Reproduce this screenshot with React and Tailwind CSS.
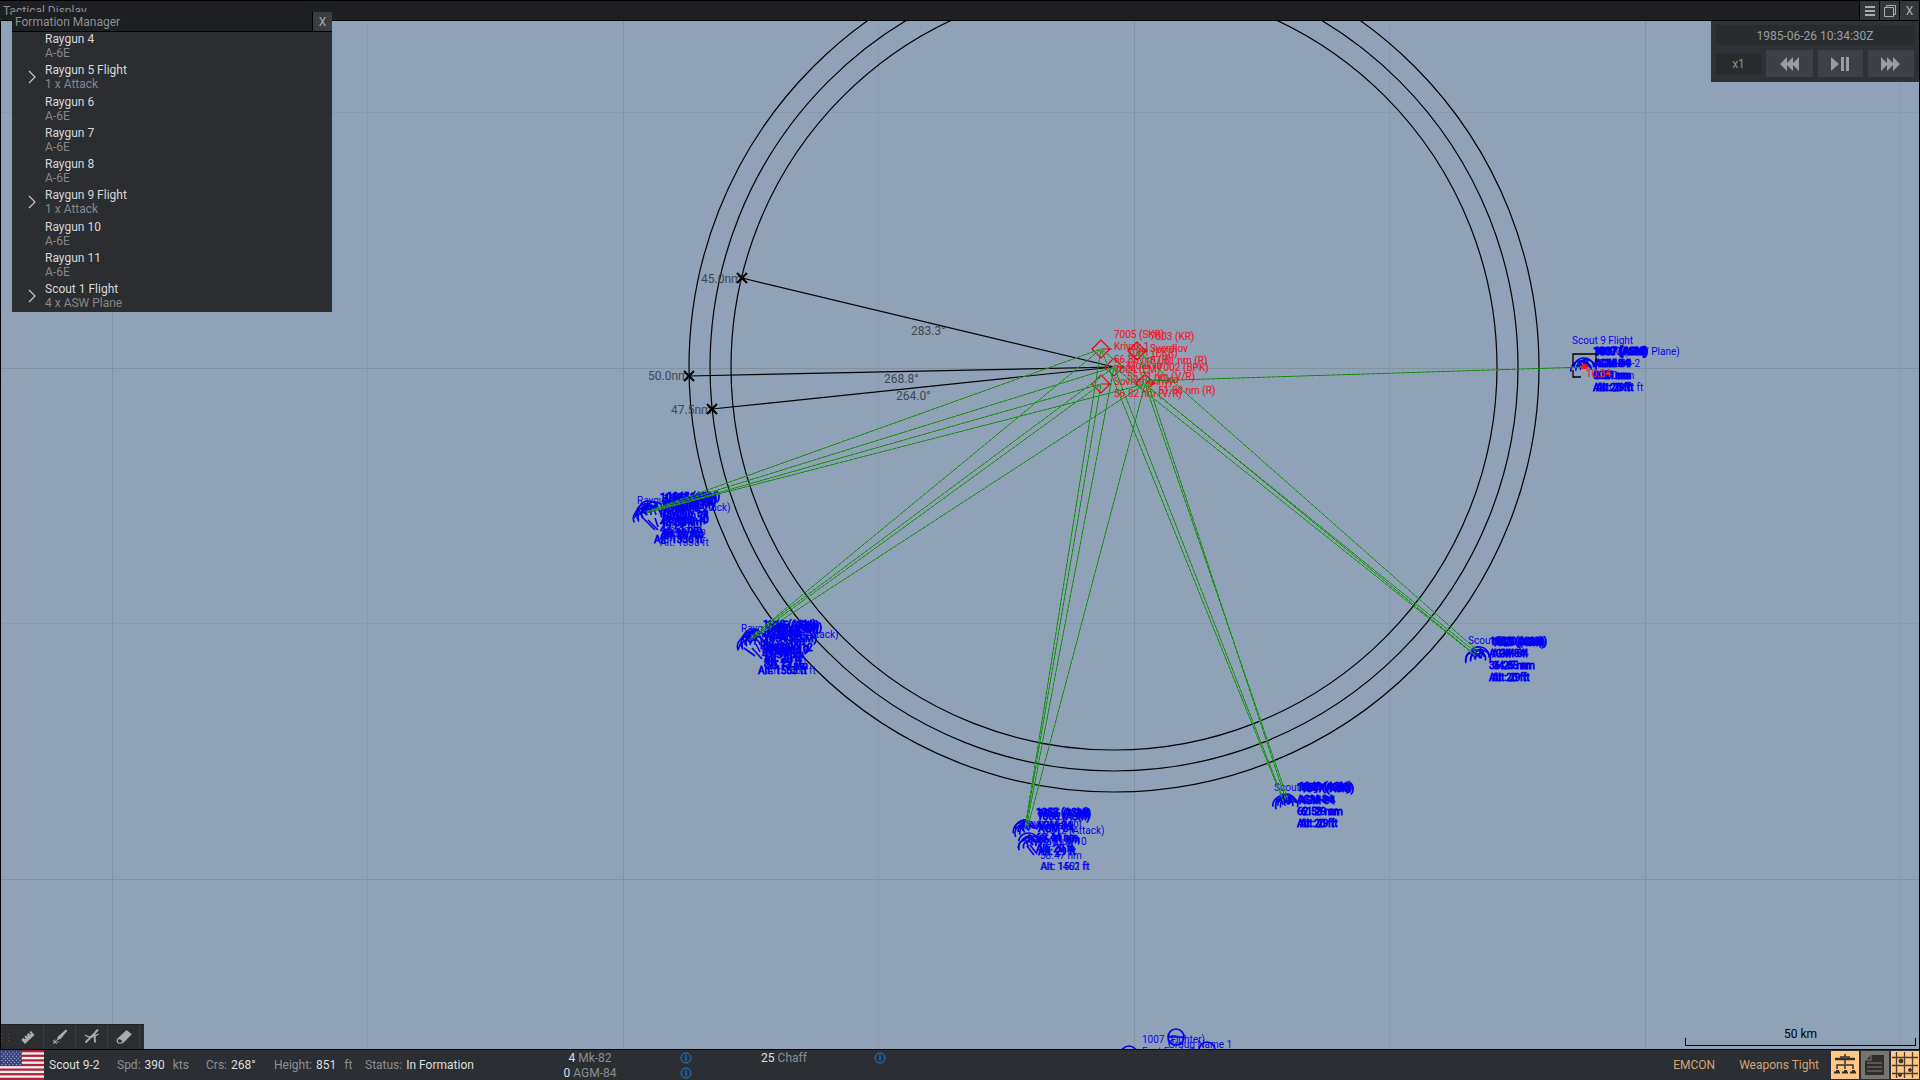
import React from "react";

const FORMATION = [
  ["Raygun 4", "A-6E"],
  ["Raygun 5 Flight", "1 x Attack", true],
  ["Raygun 6", "A-6E"],
  ["Raygun 7", "A-6E"],
  ["Raygun 8", "A-6E"],
  ["Raygun 9 Flight", "1 x Attack", true],
  ["Raygun 10", "A-6E"],
  ["Raygun 11", "A-6E"],
  ["Scout 1 Flight", "4 x ASW Plane", true],
];

const TRACKS = [
  [1101, 349, 646, 512], [1114, 367, 650, 511], [1101, 384, 647, 513], [1145, 384, 660, 509],
  [1101, 349, 750, 638], [1114, 367, 752, 636], [1101, 384, 749, 640], [1145, 384, 754, 638],
  [1101, 349, 1025, 828], [1114, 367, 1027, 824], [1101, 384, 1025, 830], [1145, 384, 1028, 826],
  [1101, 349, 1284, 803], [1114, 367, 1282, 796], [1137, 350, 1286, 800], [1145, 384, 1288, 800],
  [1101, 349, 1478, 654], [1114, 367, 1476, 656], [1137, 350, 1479, 652], [1145, 384, 1474, 654],
  [1145, 381, 1585, 367],
];

const RINGS = [383, 404, 425];

const BEARINGS = [
  { x: 742, y: 278, range: "45.0nm", rx: 701, ry: 283, deg: "283.3°", dx: 911, dy: 335 },
  { x: 689, y: 376, range: "50.0nm", rx: 648, ry: 380, deg: "268.8°", dx: 884, dy: 383 },
  { x: 712, y: 409, range: "47.5nm", rx: 671, ry: 414, deg: "264.0°", dx: 896, dy: 400 },
];

const SHIPS = [[1101, 349], [1137, 351], [1114, 367], [1101, 384], [1145, 383]];

const SHIP_LABELS = [
  [1114, 338, "7005 (SKR)"], [1150, 340, "7003 (KR)"],
  [1114, 350, "Krivak 1"], [1150, 352, "Sverdlov"],
  [1127, 356, "7001 (PKR)"], [1114, 363, "56.86 nm (R)"], [1150, 364, "57.81 nm (R)"],
  [1127, 369, "Moskva"], [1158, 371, "7002 (BPK)"],
  [1114, 373, "7004 (EM)"], [1127, 380, "55.71 nm (V/R)"], [1158, 383, "Kara"],
  [1114, 385, "Sovremennyy"], [1114, 397, "56.82 nm (V/R)"], [1158, 394, "51.80 nm (R)"],
];

const AIR_LABELS = [
  [1572, 344, "Scout 9 Flight"],
  [1599, 355, "1020 (ASW Plane)"], [1598, 367, "Scout 9-2"], [1598, 379, "0.00 nm"], [1600, 391, "Alt: 851 ft"],
  [637, 504, "Raygun Flight"], [670, 511, "1008 (Attack)"], [664, 535, "48.20 nm"], [660, 546, "Alt: 1338 ft"],
  [741, 632, "Raygun Flight"], [778, 638, "1009 (Attack)"], [764, 662, "49.12 nm"], [767, 674, "Alt: 1563 ft"],
  [1022, 827, "Raygun Flight"], [1044, 834, "1012 (Attack)"], [1040, 845, "Raygun 10"],
  [1040, 859, "58.47 nm"], [1040, 870, "Alt: 1462 ft"], [1041, 870, "Alt: 1501 ft"],
  [1274, 791, "Scout Flight"], [1468, 644, "Scout Flight"],
  [1142, 1043, "1007 (Fighter)"], [1142, 1055, "Fast Eagle 1"], [1168, 1048, "Group Name 1"],
];

const MISSILE_LABELS = [
  [1594, 355, "1007 (ASM)"], [1593, 355, "1039 (ASM)"], [1595, 355, "1037 (ASM)"],
  [1593, 367, "AGM-84"], [1595, 367, "AGM-84"],
  [1593, 379, "0.57 nm"], [1595, 379, "0.51 nm"],
  [1593, 391, "Alt: 20 ft"], [1596, 391, "Alt: 29 ft"],

  [660, 501, "1041 (ASM)"], [664, 502, "1042 (ASM)"], [667, 500, "1048 (ASM)"], [663, 505, "1050 (ASM)"], [661, 508, "1053 (ASM)"],
  [661, 511, "AGM-84"], [664, 513, "AGM-84"], [660, 517, "Raygun 14"], [663, 519, "Raygun 11"],
  [662, 523, "Raygun 10"], [665, 524, "Raygun 4"], [660, 526, "46.80 nm"],
  [660, 533, "47.51 nm"], [662, 537, "48.22 nm"], [660, 539, "Alt: 20 ft"], [654, 543, "Alt: 1336 ft"],

  [763, 628, "1043 (ASM)"], [766, 629, "1045 (ASM)"], [769, 631, "1046 (ASM)"], [765, 633, "1051 (ASM)"],
  [763, 637, "AGM-84"], [766, 639, "AGM-84"], [764, 642, "1054 (ASM)"], [763, 645, "48.33 nm"],
  [760, 649, "Raygun 9"], [766, 651, "Raygun 12"], [762, 653, "Raygun 10"], [768, 654, "Raygun 7"],
  [762, 658, "47.51 nm"], [764, 662, "Alt: 20 ft"], [764, 666, "Alt: 29 ft"], [766, 669, "50.13 nm"],
  [758, 674, "Alt: 1553 ft"],

  [1036, 816, "1055 (ASM)"], [1038, 817, "1056 (ASM)"], [1037, 820, "1066 (ASM)"],
  [1036, 829, "AGM-84"], [1038, 832, "AGM-84"],
  [1036, 841, "68.44 nm"], [1038, 843, "66.41 nm"],
  [1036, 852, "Alt: 20 ft"], [1038, 855, "Alt: 29 ft"],

  [1297, 791, "1037 (ASM)"], [1299, 790, "1049 (ASM)"], [1301, 792, "1047 (ASM)"],
  [1297, 803, "AGM-84"], [1299, 804, "AGM-84"], [1297, 815, "62.58 nm"], [1301, 815, "61.29 nm"],
  [1297, 827, "Alt: 20 ft"], [1300, 827, "Alt: 29 ft"],

  [1490, 645, "1035 (ASM)"], [1492, 646, "1029 (ASM)"], [1494, 645, "1030 (ASM)"],
  [1489, 657, "AGM-84"], [1492, 657, "AGM-84"], [1489, 669, "36.25 nm"], [1493, 669, "34.85 nm"],
  [1489, 681, "Alt: 20 ft"], [1492, 681, "Alt: 29 ft"],
];

// x, y and heading of each airborne contact
const ARCS = [
  [641, 514, -30], [645, 509, -15], [651, 511, 0], [655, 507, 10], [644, 512, -40], [648, 506, -5],
  [745, 642, -30], [750, 637, -15], [755, 641, 0], [757, 636, 10], [748, 640, -40], [753, 634, -5],
  [1022, 827, -15], [1025, 825, 0], [1023, 829, -25], [1029, 838, 5], [1032, 841, 15], [1027, 843, -20],
  [1282, 801, -10], [1286, 799, 0], [1289, 801, 15], [1284, 802, -20],
  [1475, 655, -10], [1480, 652, 10], [1474, 656, -20], [1482, 655, 20],
  [1580, 366, -10], [1584, 363, 0], [1587, 365, 10],
];

const STEMS = [
  [643, 518, 655, 530], [648, 520, 658, 530], [655, 518, 658, 527], [638, 512, 634, 518],
  [744, 648, 755, 656], [752, 648, 762, 659], [756, 644, 760, 652], [741, 642, 738, 650],
  [1027, 846, 1034, 855], [1030, 845, 1037, 854], [1020, 842, 1018, 848],
];

function TacticalMap() {
  return (
    <svg
      className="block h-full w-full font-[Roboto,sans-serif] text-[10px]"
      viewBox="1 21 1918 1028"
      preserveAspectRatio="xMidYMid slice"
      role="img"
      aria-label="Tactical map"
    >
      <g shapeRendering="crispEdges" fill="none">
        <path d="M112.5 21V1049M623.5 21V1049M1134.5 21V1049M1645.5 21V1049M0 368.5H1920M0 879.5H1920" stroke="#80929f" />
        <path d="M367.5 21V1049M878.5 21V1049M1389.5 21V1049M1900.5 21V1049M0 112.5H1920M0 623.5H1920" stroke="#889aad" />
      </g>

      <g fill="none" stroke="#000" strokeWidth="1.2">
        {RINGS.map((r) => <circle key={r} cx="1114" cy="367" r={r} />)}
      </g>

      {BEARINGS.map((b) => (
        <g key={b.range}>
          <text x={b.rx} y={b.ry} fill="#3e464f" fontSize="12">{b.range}</text>
          <text x={b.dx} y={b.dy} fill="#3e464f" fontSize="12">{b.deg}</text>
          <path d={`M${b.x} ${b.y}L1114 367`} stroke="#000" strokeWidth="1.2" />
          <path d={`M${b.x - 5} ${b.y - 5}l10 10m0 -10l-10 10`} stroke="#000" strokeWidth="2" />
        </g>
      ))}

      <g fill="#0505e8">
        {AIR_LABELS.map(([x, y, t], i) => <text key={i} x={x} y={y}>{t}</text>)}
      </g>
      <g fill="#0000f5" stroke="#0000f5" strokeWidth="0.8">
        {MISSILE_LABELS.map(([x, y, t], i) => <text key={i} x={x} y={y}>{t}</text>)}
      </g>
      <g fill="none" stroke="#0000f0" strokeWidth="1.6">
        {ARCS.map(([x, y, a], i) => (
          <path key={i} transform={`translate(${x} ${y}) rotate(${a})`} d="M-10 4C-9 -8 9 -8 10 4M-5 4C-4 -3 4 -3 5 4M0 -4V4" />
        ))}
        {STEMS.map(([a, b, c, d], i) => <path key={i} d={`M${a} ${b}L${c} ${d}`} />)}
        <circle cx="1176" cy="1037" r="8" />
        <path d="M1168 1037h16" />
        <circle cx="1129" cy="1054" r="8" />
        <circle cx="1207" cy="1050" r="8" />
      </g>

      <path d="M1573 366V354H1596V362M1573 370V377H1581" fill="none" stroke="#000" strokeWidth="1.3" />

      <g fill="#e81e2c" stroke="#e81e2c" strokeWidth="0.2">
        {SHIP_LABELS.map(([x, y, t], i) => <text key={i} x={x} y={y}>{t}</text>)}
        <text x="1586" y="377">10:34</text>
      </g>
      <g fill="none" stroke="#f00000" strokeWidth="1.2">
        {SHIPS.map(([x, y], i) => <path key={i} d={`M${x - 9} ${y}l9 -9l9 9l-9 9zM${x} ${y}h11`} />)}
      </g>
      <g fill="none">
        {TRACKS.map(([a, b, c, d], i) => (
          <g key={i}>
            <path d={`M${a} ${b}L${c} ${d}`} stroke="#dcebd9" strokeOpacity="0.5" strokeWidth="1.6" strokeDasharray="2 3" />
            <path d={`M${a} ${b}L${c} ${d}`} stroke="#0d860d" />
          </g>
        ))}
      </g>
      <rect x="1582" y="364" width="5" height="5" fill="#ff1010" />

      <path d="M1685.500 1038V1045.500H1915.500V1038" fill="none" stroke="#000" />
      <text x="1784" y="1038" fontSize="12" fill="#000">50 km</text>
    </svg>
  );
}

function ToolIcon({ name }) {
  return (
    <svg viewBox="0 0 16 16" className="size-4" fill="#a9abad" stroke="none">
      {name === "ruler" && (
        <path d="M1 9L3 7.200L4.500 8.700L5.300 8L3.800 6.300L5.500 4.800L6.500 6L7.200 5.300L6.200 4.200L8 2.500L9.500 4L10.300 3.300L8.900 1.800L10.500 .5L14 4.500L4.500 13.500L1 9.800z" transform="translate(0.500 1.500)" />
      )}
      {name === "brush" && (
        <>
          <path d="M15.500 1.500L13.800 .5L6 7.500L4.500 11.500L8.800 9.800z" />
          <path d="M1 11l4 4M5 11l-4 4M3 10.500v4M1 13h6" stroke="#a9abad" strokeWidth="0.800" />
        </>
      )}
      {name === "compass" && (
        <g fill="none" stroke="#a9abad">
          <path d="M14 .5L10.500 4.500L1.500 13.500M10.500 4.500L11 13.500" strokeWidth="2" />
          <path d="M1 6Q7 10.500 14.500 5" strokeWidth="1.300" />
        </g>
      )}
      {name === "eraser" && (
        <>
          <path d="M10.500 1L15.800 5.200L7.500 13.800Q4 15.800 1.500 14Q-.5 12 1.500 9.500z" />
          <path d="M2.500 10.300Q5.500 9.800 6.300 12.800Q3.800 14.300 2.300 13.300Q1.200 12 2.500 10.300z" fill="#2b2d30" />
        </>
      )}
    </svg>
  );
}

function Flag() {
  const stars = [];
  for (let r = 0; r < 7; r++)
    for (let c = 0; c < 6; c++) stars.push([2 + c * 3.6 + (r % 2 ? 1.8 : 0), 2 + r * 2.1]);
  return (
    <svg viewBox="0 0 44 30" preserveAspectRatio="none" className="h-[30px] w-11 shrink-0" role="img" aria-label="United States">
      <rect width="44" height="30" fill="#f1f1f3" />
      {[0, 1, 2, 3, 4, 5, 6].map((i) => <rect key={i} y={(i * 60) / 13} width="44" height={30 / 13} fill="#b3223a" />)}
      <rect width="22" height="16" fill="#38427a" />
      {stars.map(([x, y], i) => <circle key={i} cx={x} cy={y} r="0.600" fill="#c3c8de" />)}
    </svg>
  );
}

function InfoButton({ label }) {
  return (
    <button aria-label={label} className="flex size-4 items-center justify-center">
      <svg viewBox="0 0 12 12" className="size-3" fill="#1b344f" stroke="#3677b5">
        <circle cx="6" cy="6" r="5" />
        <path d="M6 3v6" />
      </svg>
    </button>
  );
}

function Weapon({ count, name }) {
  return (
    <div className="flex h-[15px] items-center gap-[18px] pr-5">
      <div className="w-[140px] text-center">
        <span className="text-[#e0e0e0]">{count}</span> {name}
      </div>
      <InfoButton label={`${name} details`} />
    </div>
  );
}

function Stat({ label, value, unit, className }) {
  return (
    <div className={`flex gap-1 whitespace-nowrap ${className}`}>
      <span>{label}</span>
      <span className="text-[#dedede]">{value}</span>
      {unit && <span className="ml-1">{unit}</span>}
    </div>
  );
}

const windowButton = "flex w-[19px] items-center justify-center bg-[#33373b]";
const timeButton = "flex h-[27px] items-center justify-center bg-[#3c4146]";

export default function App() {
  return (
    <div className="relative flex h-screen flex-col overflow-hidden bg-black font-[Roboto,sans-serif] text-[12px] text-[#8d9093]">
      <header className="flex h-[21px] shrink-0 items-start border-y border-black bg-[#1d1f22]">
        <h1 className="flex-1 pl-[3px] leading-5">Tactical Display</h1>
        <div className="flex h-[19px] gap-px bg-black px-px text-[#a9acae]">
          <button aria-label="Menu" className={windowButton}>
            <svg viewBox="0 0 12 12" className="size-3" stroke="currentColor" strokeWidth="2"><path d="M1 2h10M1 6h10M1 10h10" /></svg>
          </button>
          <button aria-label="Restore" className={windowButton}>
            <svg viewBox="0 0 12 12" className="size-3" fill="none" stroke="currentColor"><path d="M.5 2.500h9v9h-9zM2.500 2.500v-2h9v9h-2" /></svg>
          </button>
          <button aria-label="Close" className={windowButton}>X</button>
        </div>
      </header>

      <main className="relative min-h-0 flex-1 border-x border-black bg-[#90a2b7]">
        <TacticalMap />

        <section className="absolute top-0 right-0 grid w-[208px] gap-[5px] bg-[#2e3236] p-[5px] pt-1">
          <time className="h-5 bg-[#292c2f] text-center leading-[22px] text-[#9a9da0]">1985-06-26 10:34:30Z</time>
          <div className="grid grid-cols-[45px_47px_45px_1fr] items-center gap-[5px]">
            <span className="h-5 bg-[#282b2e] text-center leading-5">x1</span>
            <button aria-label="Slower" className={timeButton}>
              <svg viewBox="0 0 20 14" className="h-3.5 w-5" fill="#9a9da0"><path d="M0 7L7 0V14zM6 7L13 0V14zM12 7L19 0V14z" /></svg>
            </button>
            <button aria-label="Play or pause" className={timeButton}>
              <svg viewBox="0 0 20 14" className="h-3.5 w-5" fill="#9a9da0"><path d="M0 0L8 7L0 14zM10 0h3v14h-3zM15 0h3v14h-3z" /></svg>
            </button>
            <button aria-label="Faster" className={timeButton}>
              <svg viewBox="0 0 20 14" className="h-3.5 w-5" fill="#9a9da0"><path d="M0 0L7 7L0 14zM6 0L13 7L6 14zM12 0L19 7L12 14z" /></svg>
            </button>
          </div>
        </section>

        <nav className="absolute bottom-0 left-0 flex h-[25px] border-t border-[#1f2123] bg-[#2b2d30]">
          <div className="grid w-[11px] grid-cols-2 content-center justify-center gap-0.5">
            {[0, 1, 2, 3, 4, 5].map((i) => <i key={i} className="size-px bg-[#505356]" />)}
          </div>
          {["ruler", "brush", "compass", "eraser"].map((n) => (
            <button key={n} aria-label={n} className="flex w-8 items-center justify-center border-r border-[#3a3d40]">
              <ToolIcon name={n} />
            </button>
          ))}
          <div className="w-1" />
        </nav>
      </main>

      <section className="absolute top-3 left-3 flex h-[300px] w-80 flex-col overflow-hidden bg-[#2b2d30]">
        <div className="flex h-5 shrink-0 border-b border-black bg-[#1d1f22]">
          <h2 className="flex-1 pl-[3px] leading-[21px]">Formation Manager</h2>
          <button aria-label="Close Formation Manager" className="w-5 border-l border-black bg-[#3a3d41] text-[#a9acae]">X</button>
        </div>
        <ul className="flex flex-1 flex-col justify-between pb-0.5 text-[#85888b]">
          {FORMATION.map(([name, type, group]) => (
            <li key={name} className="flex items-center leading-[14px]">
              <div className="flex w-[33px] justify-end pr-[9px]">
                {group && (
                  <button aria-label={`Expand ${name}`}>
                    <svg viewBox="0 0 8 14" className="h-3.5 w-2" fill="none" stroke="#c8c8c8" strokeWidth="1.200"><path d="M1 1L7 7L1 13" /></svg>
                  </button>
                )}
              </div>
              <div>
                <div className="text-[#d8d8d8]">{name}</div>
                <div>{type}</div>
              </div>
            </li>
          ))}
        </ul>
      </section>

      <footer className="flex h-[31px] shrink-0 items-center border-t border-black bg-[#2b2e32]">
        <div className="flex w-[520px] shrink-0 items-center">
          <Flag />
          <span className="w-[73px] pl-[5px] text-[#dedede]">Scout 9-2</span>
          <Stat label="Spd:" value="390" unit="kts" className="w-[89px]" />
          <Stat label="Crs:" value="268°" className="w-[68px]" />
          <Stat label="Height:" value="851" unit="ft" className="w-[91px]" />
          <Stat label="Status:" value="In Formation" className="" />
        </div>
        <div className="flex flex-1 items-start">
          <div>
            <Weapon count="4" name="Mk-82" />
            <Weapon count="0" name="AGM-84" />
          </div>
          <Weapon count="25" name="Chaff" />
        </div>
        <div className="flex items-center text-[#cfa778]">
          <button>EMCON</button>
          <button className="ml-6">Weapons Tight</button>
          <div className="ml-3 flex gap-0.5 pr-px">
            <button aria-label="Formation" className="size-7 bg-[#ffc685]">
              <svg viewBox="0 0 28 28" className="size-7" fill="none" stroke="#373028">
                <path d="M4 8h20" strokeWidth="2.500" />
                <path d="M9 6h10M14 3v3M14 9v4M6 18v-4h16v4M14 14v4" strokeWidth="1.500" />
                <path d="M3 21.500h6M11 21.500h6M19 21.500h6" strokeWidth="2" />
                <path d="M5 20h3M13 20h3M21 20h3" strokeWidth="2" />
              </svg>
            </button>
            <button aria-label="Reports" className="size-7 bg-[#77756f]">
              <svg viewBox="0 0 28 28" className="size-7" fill="#302e2d">
                <path d="M10 4H23V24H4V10z" />
                <path d="M6 12H21M6 16H21M6 20H21M5 9H10V4" fill="none" stroke="#68655f" strokeWidth="1.300" />
              </svg>
            </button>
            <button aria-label="Map" className="size-7 bg-[#ffc685]">
              <svg viewBox="0 0 28 28" className="size-7" fill="#373028" stroke="#4c3e2f">
                <path d="M5.500 1V27M13.500 1V27M21.500 1V27M1 6.500H27M1 14.500H27M1 22.500H27" fill="none" strokeWidth="1.300" />
                <circle cx="10" cy="10" r="2" />
                <circle cx="19" cy="19" r="1.500" />
                <circle cx="9" cy="24" r="1.500" />
              </svg>
            </button>
          </div>
        </div>
      </footer>
    </div>
  );
}
